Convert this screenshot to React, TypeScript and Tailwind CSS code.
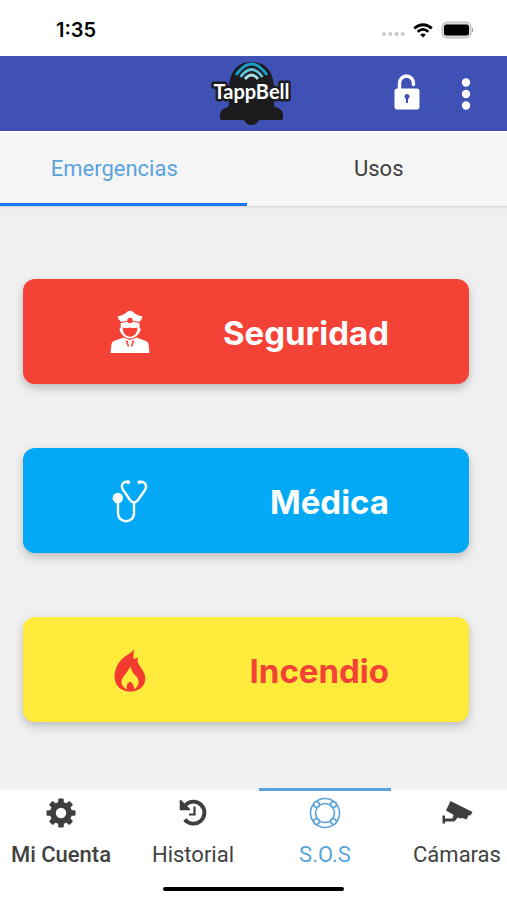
import React, { useState } from 'react';

function SignalDots() {
  return (
    <svg width="24" height="6" viewBox="0 0 24 6" fill="#c9c9c9" aria-hidden="true">
      <circle cx="3" cy="3" r="2" />
      <circle cx="9.200" cy="3" r="2" />
      <circle cx="15.500" cy="3" r="2" />
      <circle cx="21.700" cy="3" r="2" />
    </svg>
  );
}

function WifiIcon() {
  return (
    <svg width="20" height="15" viewBox="0 0 20 15" fill="none" stroke="#000" aria-hidden="true">
      <path d="M1.200 5.400Q10-2 18.800 5.400" strokeWidth="2.800" />
      <path d="M4.600 8.700Q10 4 15.400 8.700" strokeWidth="2.500" />
      <path d="M7.200 11.700Q10 9.200 12.800 11.700L10 14.500Z" fill="#000" stroke="none" />
    </svg>
  );
}

function BatteryIcon() {
  return (
    <svg width="34" height="18" viewBox="0 0 34 18" aria-hidden="true">
      <rect x="1" y="1" width="29" height="16" rx="5" fill="#d9d9d9" stroke="#bcbcbc" />
      <rect x="3" y="3.500" width="25" height="11" rx="2.500" fill="#000" />
      <path d="M31 6.500Q33.500 9 31 11.500Z" fill="#999" />
    </svg>
  );
}

function Logo() {
  return (
    <svg width="86" height="66" viewBox="0 0 86 66" role="img" aria-label="TappBell">
      <path
        d="M20 24C22 8 30 1 42.500 1S63 8 65 24V44Q65 46 69 47Q74 49 74 54V57Q74 59 71 59H50Q48 64 42.500 64T35 59H14Q11 59 11 57V54Q11 49 16 47Q20 46 20 44Z"
        fill="#1c1c1e"
      />
      <g fill="none" strokeWidth="2.800">
        <path d="M27 14Q42.500-8 58 14" stroke="#199fc9" />
        <path d="M31.500 16Q42.500 1 53.500 16" stroke="#5fc0d8" />
        <path d="M36 18Q42.500 10 49 18" stroke="#a9dfe8" />
      </g>
      <text
        x="42.500"
        y="38"
        textAnchor="middle"
        fill="#fff"
        stroke="#1c1c1e"
        strokeWidth="5"
        strokeLinejoin="round"
        paintOrder="stroke"
        className="font-['Lato',sans-serif] text-[20px] font-bold"
      >
        TappBell
      </text>
    </svg>
  );
}

function UnlockIcon() {
  return (
    <svg width="28" height="36" viewBox="0 0 28 36" aria-hidden="true">
      <path d="M6.500 16V9.500a7 7.500 0 0 1 14 0V10.500" fill="none" stroke="#fff" strokeWidth="3.400" strokeLinecap="round" />
      <rect x="1.500" y="14.500" width="25" height="21" rx="2.800" fill="#fff" />
      <circle cx="14" cy="22.500" r="2.500" fill="#3f51b5" />
      <path d="M13 23h2v6h-2z" fill="#3f51b5" />
    </svg>
  );
}

function MoreIcon() {
  return (
    <svg width="10" height="34" viewBox="0 0 10 34" fill="#fff" aria-hidden="true">
      <circle cx="5" cy="5.500" r="4.200" />
      <circle cx="5" cy="17" r="4.200" />
      <circle cx="5" cy="28.500" r="4.200" />
    </svg>
  );
}

function OfficerIcon() {
  return (
    <svg width="40" height="44" viewBox="0 0 40 44" aria-hidden="true">
      <path d="M7.500 6.500Q14 5 17.500 1.500Q20 0 22.500 1.500Q26 5 32.500 6.500Q32 9.500 29.500 12Q20 9 11 12Q8 9.500 7.500 6.500Z" fill="#fff" />
      <path
        d="M10.700 13.200Q20 10 29.500 13.200V17.500Q31.500 18.500 29.500 22.500Q26 28 20 28.500Q14 28 10.700 22.500Q8.500 18.500 10.700 17.500Z"
        fill="#fff"
      />
      <path d="M12.800 17.500Q16 18.500 20 17.500Q24 18.500 27.500 17.500Q27.500 22 24.500 25Q20 28.500 15.500 25Q12.500 22 12.800 17.500Z" fill="#f44336" />
      <circle cx="20" cy="10.500" r="2.700" fill="#f44336" />
      <path d="M13.500 27.500L4 31Q1.500 32 1.500 34L.5 43H39.500L38.500 34Q38.500 32 36 31L26.500 27.500L20 30Z" fill="#fff" />
      <path d="M16.500 30.500L18.500 36.500M23.500 30.500L21.500 36.500" fill="none" stroke="#f44336" strokeWidth="1.600" />
    </svg>
  );
}

function StethoscopeIcon() {
  return (
    <svg width="36" height="44" viewBox="0 0 36 44" fill="none" stroke="#fff" strokeLinecap="round" aria-hidden="true">
      <path d="M16.500 3.200C12 1.500 8.500 5.500 10.500 10L18 21Q22 26 26 21L33 11C36 5.500 31.500 1.500 27 3.200" strokeWidth="2.400" />
      <path d="M22 24V34C22 45 6 45 6 34V20" strokeWidth="2.400" />
      <circle cx="16.200" cy="3.200" r="1.500" fill="#fff" />
      <circle cx="27.500" cy="3.200" r="1.500" fill="#fff" />
      <circle cx="5.800" cy="19" r="5.200" fill="#fff" stroke="none" />
    </svg>
  );
}

function FlameIcon() {
  return (
    <svg width="32" height="44" viewBox="0 0 32 44" aria-hidden="true">
      <path
        d="M20.500 1C18 5 9 8 4 16C-2 27 -1 41 14 43.500H18C30 42 34 32 29.500 24C27 18 22 16 24 9.500L19.500 11Q19 5 20.500 1Z"
        fill="#f13c2f"
      />
      <path
        d="M16.500 18.500Q18 25 22 28C26 32 25.500 38 20 41.500Q20.500 36 16 33.500Q11.500 36 13 41.500C6.500 38 6 33 10 28Q14 23 16.500 18.500Z"
        fill="#ffeb3b"
      />
    </svg>
  );
}

function GearIcon() {
  return (
    <svg width="30" height="30" viewBox="0 0 30 30" aria-hidden="true">
      <g fill="#3e3e3e">
        <rect x="12.200" y=".5" width="5.600" height="29" rx="1.200" />
        <rect x="12.200" y=".5" width="5.600" height="29" rx="1.200" transform="rotate(45 15 15)" />
        <rect x="12.200" y=".5" width="5.600" height="29" rx="1.200" transform="rotate(90 15 15)" />
        <rect x="12.200" y=".5" width="5.600" height="29" rx="1.200" transform="rotate(135 15 15)" />
        <circle cx="15" cy="15" r="11" />
      </g>
      <circle cx="15" cy="15" r="5.200" fill="#fff" />
    </svg>
  );
}

function HistoryIcon() {
  return (
    <svg width="30" height="30" viewBox="0 0 30 30" fill="none" stroke="#3e3e3e" aria-hidden="true">
      <path d="M7.500 7A11 11 0 1 1 6.800 21.500" strokeWidth="3.900" />
      <path d="M2.500 2.500V11.500H11.500Z" fill="#3e3e3e" strokeWidth="1.600" strokeLinejoin="round" />
      <path d="M16.500 8.500V16.500H11" strokeWidth="2.200" />
    </svg>
  );
}

function LifebuoyIcon() {
  return (
    <svg width="32" height="32" viewBox="0 0 32 32" fill="none" stroke="#5ba3dc" strokeWidth="1.600" aria-hidden="true">
      <circle cx="16" cy="16" r="14.500" />
      <circle cx="16" cy="16" r="9.500" />
      <g fill="#fff">
        <circle cx="7.500" cy="7.500" r="2.800" />
        <circle cx="24.500" cy="7.500" r="2.800" />
        <circle cx="7.500" cy="24.500" r="2.800" />
        <circle cx="24.500" cy="24.500" r="2.800" />
      </g>
    </svg>
  );
}

function CameraIcon() {
  return (
    <svg width="32" height="30" viewBox="0 0 32 30" fill="#3e3e3e" aria-hidden="true">
      <path d="M9.500 3L31.500 14L29.500 17.500L27.800 17L25.500 21.500L21.500 20L19 20.500L5 12.500Z" />
      <path d="M1.500 17.500H4V20.500H11.500L13 15L18 18L13.500 23.500H4V25.500H1.500Z" />
    </svg>
  );
}

const emergencies = [
  { label: 'Seguridad', icon: <OfficerIcon />, tone: 'bg-[#f44336] text-white' },
  { label: 'Médica', icon: <StethoscopeIcon />, tone: 'bg-[#03a9f4] text-white' },
  { label: 'Incendio', icon: <FlameIcon />, tone: 'bg-[#ffeb3b] text-[#f44336]' },
];

const sections = [
  { label: 'Mi Cuenta', icon: <GearIcon />, emphasis: 'font-medium' },
  { label: 'Historial', icon: <HistoryIcon />, emphasis: '' },
  { label: 'S.O.S', icon: <LifebuoyIcon />, emphasis: '' },
  { label: 'Cámaras', icon: <CameraIcon />, emphasis: '' },
];

export default function App() {
  const [tab, setTab] = useState('Emergencias');
  const [section, setSection] = useState('S.O.S');

  return (
    <div className="flex min-h-screen flex-col overflow-hidden bg-[#f0f0f0] font-['Roboto',sans-serif] text-[#424242]">
      <div className="flex h-14 items-center justify-between bg-white pt-1 pr-8 pl-14">
        <span className="font-['Inter',sans-serif] text-xl font-semibold text-black">1:35</span>
        <div className="flex items-center gap-2">
          <span className="pt-2"><SignalDots /></span>
          <WifiIcon />
          <BatteryIcon />
        </div>
      </div>

      <header className="grid h-[75px] grid-cols-[1fr_auto_1fr] items-center bg-[#3f51b5] pr-1">
        <span />
        <Logo />
        <div className="flex items-center justify-end gap-10 pr-8">
          <button type="button" aria-label="Desbloquear" className="pb-1"><UnlockIcon /></button>
          <button type="button" aria-label="Más opciones"><MoreIcon /></button>
        </div>
      </header>

      <div role="tablist" className="-mr-1 -ml-[18px] flex h-[75px] border-t-2 border-white bg-[#f5f5f5] shadow-sm">
        {['Emergencias', 'Usos'].map((name) => (
          <button
            key={name}
            type="button"
            role="tab"
            aria-selected={tab === name}
            onClick={() => setTab(name)}
            className={
              tab === name
                ? 'flex-1 border-b-3 border-[#1877f2] text-[22px] text-[#5ba3dc]'
                : 'flex-1 border-b-3 border-transparent text-[22px]'
            }
          >
            {name}
          </button>
        ))}
      </div>

      <main className="flex flex-1 flex-col gap-16 pt-[73px] pr-[38px] pb-16 pl-[23px]">
        {emergencies.map(({ label, icon, tone }) => (
          <button
            key={label}
            type="button"
            className={`flex h-[105px] items-center justify-between rounded-xl pr-20 pl-[87px] shadow-[0_4px_10px_rgba(0,0,0,0.22)] ${tone}`}
          >
            <span className="flex w-10 justify-center">{icon}</span>
            <span className="pt-1 font-['Inter',sans-serif] text-[33px] font-bold">{label}</span>
          </button>
        ))}
      </main>

      <footer className="bg-white">
        <nav className="-mr-4 -ml-[5px] flex">
          {sections.map(({ label, icon, emphasis }) => (
            <button
              key={label}
              type="button"
              onClick={() => setSection(label)}
              aria-current={section === label ? 'page' : undefined}
              className={
                section === label
                  ? 'flex flex-1 flex-col items-center border-t-3 border-[#5ba3dc] pt-[5px] text-[#5ba3dc]'
                  : 'flex flex-1 flex-col items-center border-t-3 border-[#f7f7f7] pt-[5px]'
              }
            >
              <span className="flex h-[38px] items-center pb-1">{icon}</span>
              <span className={`pt-[5px] text-[22px] leading-8 ${emphasis}`}>{label}</span>
            </button>
          ))}
        </nav>
        <div className="flex justify-center pt-4 pb-[9px]">
          <span className="h-1 w-[181px] rounded-full bg-black" />
        </div>
      </footer>
    </div>
  );
}
